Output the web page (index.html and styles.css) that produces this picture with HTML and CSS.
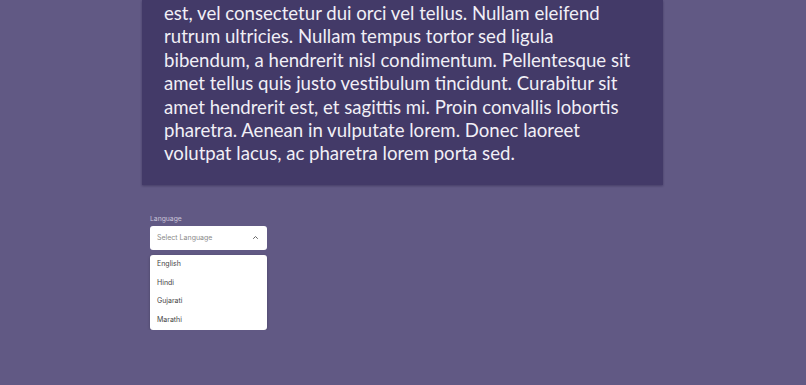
FILE: index.html
```html
<!DOCTYPE html>
<html lang="en">
<head>
    <meta charset="UTF-8">
    <title>Language</title>
    <link rel="stylesheet" href="styles.css">
</head>
<body>
<div class="page">
    <div class="card">
        <p class="text">
            est, vel consectetur dui orci vel tellus. Nullam eleifend<br>
            rutrum ultricies. Nullam tempus tortor sed ligula<br>
            bibendum, a hendrerit nisl condimentum. Pellentesque sit<br>
            amet tellus quis justo vestibulum tincidunt. Curabitur sit<br>
            amet hendrerit est, et sagittis mi. Proin convallis lobortis<br>
            pharetra. Aenean in vulputate lorem. Donec laoreet<br>
            volutpat lacus, ac pharetra lorem porta sed.
        </p>
    </div>
    <div class="field">
        <div class="label">Language</div>
        <div class="select">
            <span class="placeholder">Select Language</span>
            <svg class="chevron" width="7" height="5" viewBox="0 0 7 5">
                <path d="M1.2 3.8 L3.5 1.5 L5.8 3.8" fill="none" stroke="#666" stroke-width="1"/>
            </svg>
        </div>
        <ul class="menu">
            <li>English</li>
            <li>Hindi</li>
            <li>Gujarati</li>
            <li>Marathi</li>
        </ul>
    </div>
</div>
</body>
</html>
```

FILE: styles.css
```css
body {
    margin: 0;
    background-color: #615984;
    font-family: "Lato", "Open Sans", sans-serif;
}

.page {
    width: 521px;
    margin: 0 0 0 142px;
}

.card {
    background-color: #433a68;
    padding: 2px 22px 19px 22px;
    box-shadow: 0 1px 2px rgba(30, 20, 60, 0.4);
}

.text {
    margin: 0;
    color: #f1eff6;
    font-size: 18.6px;
    line-height: 23.4px;
    white-space: nowrap;
}

.field {
    padding: 29px 0 0 8px;
    font-family: "Inter", "Open Sans", sans-serif;
}

.label {
    font-size: 6.8px;
    color: #c9c4d8;
    margin-bottom: 3px;
}

.select {
    width: 117px;
    height: 24px;
    box-sizing: border-box;
    background: #fff;
    border-radius: 3px;
    display: flex;
    align-items: center;
    justify-content: space-between;
    padding: 0 8px 0 7px;
}

.placeholder {
    font-size: 7px;
    color: #8a8a8a;
}

.menu {
    list-style: none;
    margin: 5px 0 0 0;
    padding: 0;
    width: 117px;
    box-sizing: border-box;
    background: #fff;
    border-radius: 3px;
    box-shadow: 0 1px 3px rgba(0, 0, 0, 0.25);
}

.menu li {
    font-size: 7px;
    color: #444;
    padding: 0 7px;
    height: 18.7px;
    line-height: 18.7px;
}
```
